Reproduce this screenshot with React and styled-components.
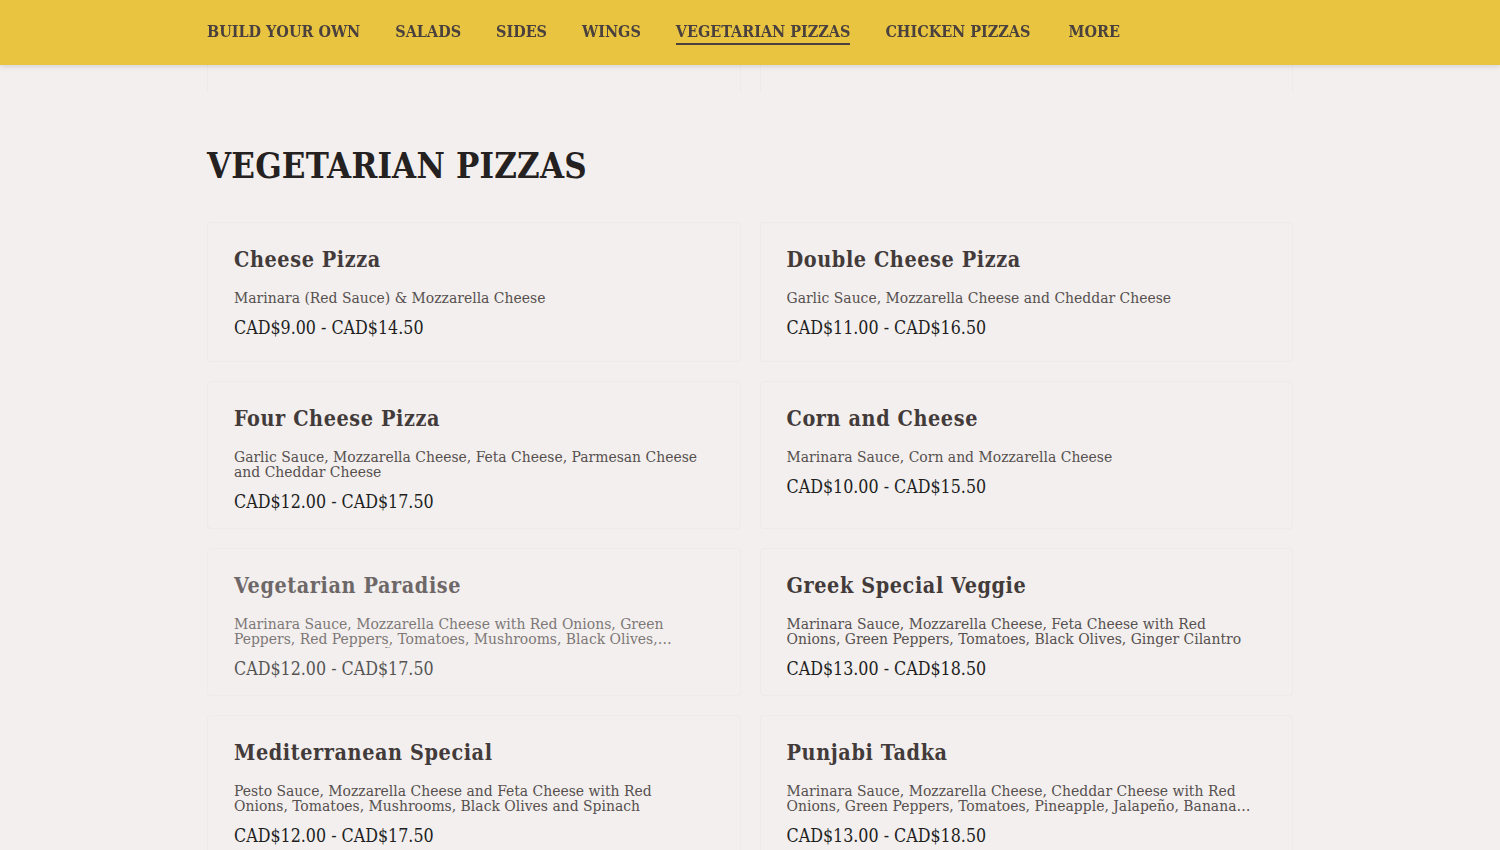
import React from 'react';
import styled, { createGlobalStyle } from 'styled-components';

const GlobalStyle = createGlobalStyle`
  * {
    box-sizing: border-box;
    margin: 0;
    padding: 0;
  }
  body {
    background: #f2efee;
    font-family: "DejaVu Serif", "Liberation Serif", serif;
    overflow: hidden;
  }
`;

const TopNav = styled.header`
  position: fixed;
  z-index: 2;
  top: 0;
  left: 0;
  right: 0;
  height: 65px;
  background: #e8c441;
  box-shadow: 0 1px 6px rgba(0, 0, 0, 0.14);
`;

const NavInner = styled.nav`
  display: flex;
  align-items: center;
  gap: 35px;
  max-width: 1086px;
  height: 100%;
  margin: 0 auto;
`;

const NavItem = styled.a`
  padding-bottom: 2px;
  margin-top: 1px;
  margin-left: ${({ spaced }) => (spaced ? '3px' : '0')};
  color: #4a403d;
  font-family: "DejaVu Serif Condensed", "DejaVu Serif", serif;
  font-size: 16px;
  font-weight: 700;
  text-decoration: none;
  border-bottom: 2px solid ${({ active }) => (active ? '#4a403d' : 'transparent')};
  cursor: pointer;
`;

const Main = styled.main`
  max-width: 1086px;
  margin: 0 auto;
`;

const PrevRow = styled.div`
  display: grid;
  grid-template-columns: 1fr 1fr;
  align-items: end;
  gap: 19px;
  height: 93px;
  overflow: hidden;
`;

const SectionTitle = styled.h2`
  margin: 50px 0 33px;
  color: #252121;
  font-family: "DejaVu Serif Condensed", "DejaVu Serif", serif;
  font-size: 34.5px;
  font-weight: 700;
  line-height: 46px;
  letter-spacing: 0.2px;
`;

const Grid = styled.div`
  display: grid;
  grid-template-columns: 1fr 1fr;
  gap: 19px;
`;

const Card = styled.article`
  min-height: 140px;
  padding: 24px 26px 15px;
  border: 1px solid #edeae9;
  border-radius: 4px;
  background: #f2efee;
  opacity: ${({ faded }) => (faded ? 0.75 : 1)};
  cursor: pointer;
`;

const GhostCard = styled(Card)`
  height: 140px;
`;

const ItemName = styled.h3`
  margin-bottom: 18px;
  color: #433a3a;
  font-family: "DejaVu Serif Condensed", "DejaVu Serif", serif;
  font-size: 21.4px;
  font-weight: 700;
  line-height: 26px;
  letter-spacing: 0.6px;
`;

const Description = styled.p`
  display: -webkit-box;
  -webkit-line-clamp: 2;
  -webkit-box-orient: vertical;
  overflow: hidden;
  max-width: 470px;
  margin-bottom: 10px;
  color: #57504e;
  font-family: "DejaVu Serif Condensed", "DejaVu Serif", serif;
  font-size: 15.5px;
  line-height: 15px;
  padding-bottom: 1px;
`;

const Price = styled.div`
  color: #221e1e;
  font-family: "DejaVu Serif Condensed", "DejaVu Serif", serif;
  font-size: 17.7px;
  line-height: 22px;
`;

const navItems = [
  'BUILD YOUR OWN',
  'SALADS',
  'SIDES',
  'WINGS',
  'VEGETARIAN PIZZAS',
  'CHICKEN PIZZAS',
  'MORE',
];

const pizzas = [
  {
    name: 'Cheese Pizza',
    description: 'Marinara (Red Sauce) & Mozzarella Cheese',
    price: 'CAD$9.00 - CAD$14.50',
  },
  {
    name: 'Double Cheese Pizza',
    description: 'Garlic Sauce, Mozzarella Cheese and Cheddar Cheese',
    price: 'CAD$11.00 - CAD$16.50',
  },
  {
    name: 'Four Cheese Pizza',
    description:
      'Garlic Sauce, Mozzarella Cheese, Feta Cheese, Parmesan Cheese and Cheddar Cheese',
    price: 'CAD$12.00 - CAD$17.50',
  },
  {
    name: 'Corn and Cheese',
    description: 'Marinara Sauce, Corn and Mozzarella Cheese',
    price: 'CAD$10.00 - CAD$15.50',
  },
  {
    name: 'Vegetarian Paradise',
    description:
      'Marinara Sauce, Mozzarella Cheese with Red Onions, Green Peppers, Red Peppers, Tomatoes, Mushrooms, Black Olives, Pineapple and Jalapeño',
    price: 'CAD$12.00 - CAD$17.50',
    faded: true,
  },
  {
    name: 'Greek Special Veggie',
    description:
      'Marinara Sauce, Mozzarella Cheese, Feta Cheese with Red Onions, Green Peppers, Tomatoes, Black Olives, Ginger Cilantro',
    price: 'CAD$13.00 - CAD$18.50',
  },
  {
    name: 'Mediterranean Special',
    description:
      'Pesto Sauce, Mozzarella Cheese and Feta Cheese with Red Onions, Tomatoes, Mushrooms, Black Olives and Spinach',
    price: 'CAD$12.00 - CAD$17.50',
  },
  {
    name: 'Punjabi Tadka',
    description:
      'Marinara Sauce, Mozzarella Cheese, Cheddar Cheese with Red Onions, Green Peppers, Tomatoes, Pineapple, Jalapeño, Banana Peppers and Ginger Cilantro',
    price: 'CAD$13.00 - CAD$18.50',
  },
];

const App = () => (
  <>
    <GlobalStyle />
    <TopNav>
      <NavInner>
        {navItems.map((item) => (
          <NavItem
            key={item}
            active={item === 'VEGETARIAN PIZZAS'}
            spaced={item === 'MORE'}
          >
            {item}
          </NavItem>
        ))}
      </NavInner>
    </TopNav>
    <Main>
      <PrevRow>
        <GhostCard />
        <GhostCard />
      </PrevRow>
      <SectionTitle>VEGETARIAN PIZZAS</SectionTitle>
      <Grid>
        {pizzas.map((pizza) => (
          <Card key={pizza.name} faded={pizza.faded}>
            <ItemName>{pizza.name}</ItemName>
            <Description>{pizza.description}</Description>
            <Price>{pizza.price}</Price>
          </Card>
        ))}
      </Grid>
    </Main>
  </>
);

export default App;
